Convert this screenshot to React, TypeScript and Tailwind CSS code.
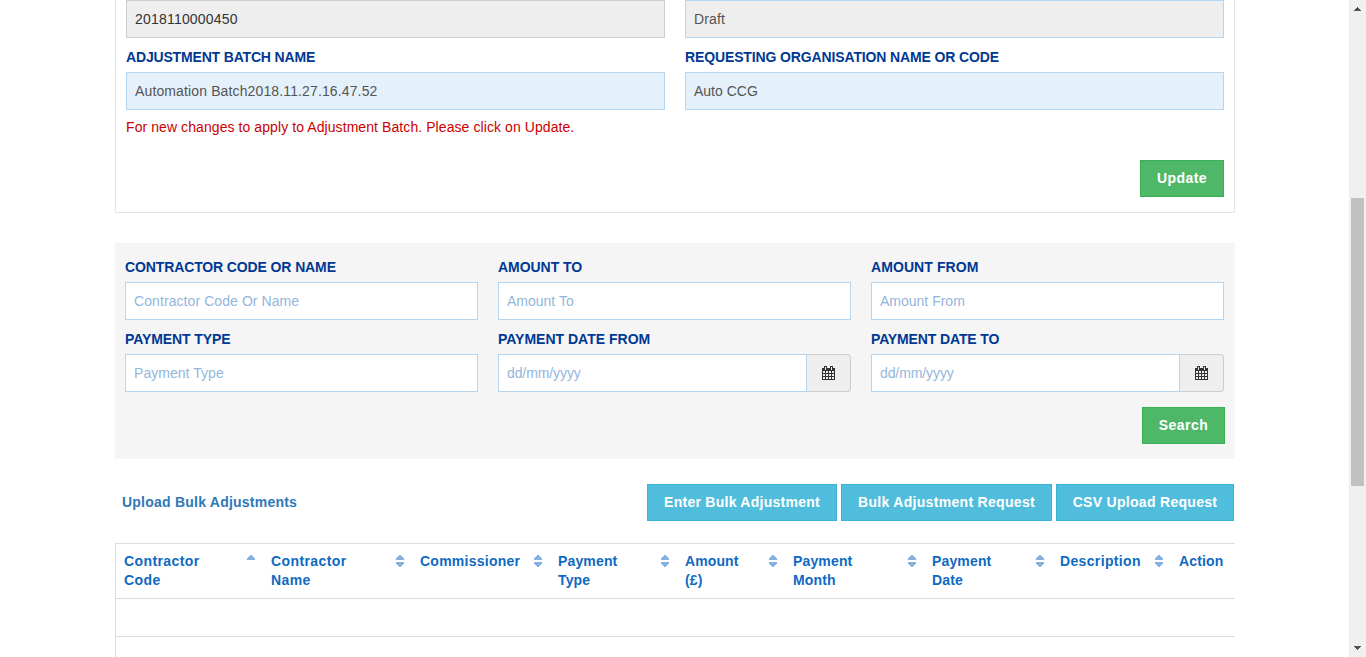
import React from "react";

const LABEL = "flex h-[34px] items-center whitespace-nowrap pb-px pt-1.5 font-bold text-[#003893]";
const INPUT =
  "h-[38px] w-full min-w-0 rounded-none border border-[#b6d6f0] px-2 text-[14px] outline-none placeholder:text-[#94b6dd] placeholder:opacity-100";
const BUTTON = "h-[37px] shrink-0 whitespace-nowrap border text-center font-bold text-white";

function CalendarIcon() {
  return (
    <svg width="13" height="14" viewBox="0 0 13 14" fill="none" shapeRendering="crispEdges">
      <path
        fill="#333"
        fillRule="evenodd"
        d="M0 2h2v-2h3v2h3v-2h3v2h2v12H0zM3 1v3h1V1zM9 1v3h1V1zM1 5v2h2V5zM4 5v2h2V5zM7 5v2h2V5zM10 5v2h2V5zM1 8v2h2V8zM4 8v2h2V8zM7 8v2h2V8zM10 8v2h2V8zM1 11v2h2v-2zM4 11v2h2v-2zM7 11v2h2v-2zM10 11v2h2v-2z"
      />
    </svg>
  );
}

function SortIcon({ ascending }: { ascending?: boolean }) {
  return (
    <svg width="8" height="12" viewBox="0 0 8 12" fill="#86b0de" shapeRendering="crispEdges" className="mt-[11px] shrink-0">
      <path d="M3 0h2v1h1v1h1v1h1v2H0V3h1V2h1V1h1z" />
      {!ascending && <path d="M0 7h8v2H7v1H6v1H5v1H3v-1H2v-1H1V9H0z" />}
    </svg>
  );
}

type FieldProps = {
  label: string;
  labelClass?: string;
  placeholder?: string;
  inputClass?: string;
  value?: string;
  date?: boolean;
};

function Field({ label, labelClass = "", placeholder, inputClass = "", value, date }: FieldProps) {
  return (
    <div>
      <label className={`${LABEL} ${labelClass}`}>{label}</label>
      <div className="flex">
        <input className={`${INPUT} ${inputClass}`} placeholder={placeholder} defaultValue={value} />
        {date && (
          <span className="flex h-[38px] w-[44px] shrink-0 items-center justify-center rounded-r border border-l-0 border-[#ccc] bg-[#eee]">
            <CalendarIcon />
          </span>
        )}
      </div>
    </div>
  );
}

const columns = [
  { lines: ["Contractor", "Code"], cell: "w-[146px] pl-2 tracking-[0.4px]" },
  { lines: ["Contractor", "Name"], cell: "w-[149px] pl-[9px] tracking-[0.4px]" },
  { lines: ["Commissioner"], cell: "w-[138px] pl-[9px] tracking-[0.25px]" },
  { lines: ["Payment", "Type"], cell: "w-[127px] pl-[9px] tracking-[0.15px]" },
  { lines: ["Amount", "(£)"], cell: "w-[108px] pl-[9px] tracking-[0.1px]" },
  { lines: ["Payment", "Month"], cell: "w-[139px] pl-[9px] tracking-[0.15px]" },
  { lines: ["Payment", "Date"], cell: "w-[128px] pl-[9px] tracking-[0.15px]" },
  { lines: ["Description"], cell: "w-[119px] pl-[9px] tracking-[0.35px]" },
];

function ScrollBar() {
  return (
    <div className="flex h-full w-[17px] shrink-0 flex-col items-center justify-between bg-[#f0f0f0] py-[7px]">
      <svg width="7" height="4" viewBox="0 0 7 4" fill="#505050" shapeRendering="crispEdges" className="shrink-0">
        <path d="M3 0h1v1h1v1h1v1h1v1H0V3h1V2h1V1h1z" />
      </svg>
      <div className="mb-[160px] mt-[187px] w-[13px] grow bg-[#c1c1c1]" />
      <svg width="7" height="4" viewBox="0 0 7 4" fill="#505050" shapeRendering="crispEdges" className="shrink-0">
        <path d="M0 0h7v1H6v1H5v1H4v1H3V3H2V2H1V1H0z" />
      </svg>
    </div>
  );
}

export default function App() {
  return (
    <div className="flex h-[657px] w-[1366px] overflow-hidden bg-white font-['Liberation_Sans',Arial,sans-serif] text-[14px] leading-[19px]">
      <main className="w-[1349px] shrink-0 pl-[115px]">
        <div className="w-[1120px]">
          <section className="h-[213px] border border-t-0 border-[#e4e4e4] px-[10px]">
            <div className="grid grid-cols-2 gap-x-5">
              <input readOnly className="h-[38px] border border-[#ccc] bg-[#eee] px-2 tracking-[0.2px] text-[#333] outline-none" defaultValue="2018110000450" />
              <input readOnly className={`${INPUT} bg-[#eee] text-[#555] tracking-[0.15px]`} defaultValue="Draft" />
              <Field label="ADJUSTMENT BATCH NAME" labelClass="tracking-[-0.17px]" value="Automation Batch2018.11.27.16.47.52" inputClass="bg-[#e4f0fa] text-[#555] tracking-[0.13px]" />
              <Field label="REQUESTING ORGANISATION NAME OR CODE" labelClass="tracking-[-0.13px]" value="Auto CCG" inputClass="bg-[#e4f0fa] text-[#555]" />
            </div>
            <p className="mt-2 whitespace-nowrap tracking-[0.08px] text-[#c00]">
              For new changes to apply to Adjustment Batch. Please click on Update.
            </p>
            <div className="mt-[23px] flex justify-end">
              <button className={`${BUTTON} w-[84px] border-[#39b054] bg-[#4fb768] tracking-[0.4px]`}>Update</button>
            </div>
          </section>

          <section className="mt-[30px] h-[216px] bg-[#f5f5f5] px-[10px] pt-[5px]">
            <div className="grid grid-cols-[353px_353px_353px] gap-x-5">
              <Field label="CONTRACTOR CODE OR NAME" labelClass="tracking-[-0.12px]" placeholder="Contractor Code Or Name" inputClass="bg-white tracking-[0.08px]" />
              <Field label="AMOUNT TO" labelClass="tracking-[-0.05px]" placeholder="Amount To" inputClass="bg-white" />
              <Field label="AMOUNT FROM" labelClass="tracking-[0.08px]" placeholder="Amount From" inputClass="bg-white" />
              <Field label="PAYMENT TYPE" labelClass="tracking-[-0.08px]" placeholder="Payment Type" inputClass="bg-white tracking-[0.04px]" />
              <Field label="PAYMENT DATE FROM" placeholder="dd/mm/yyyy" inputClass="bg-white tracking-[-0.1px]" date />
              <Field label="PAYMENT DATE TO" labelClass="tracking-[-0.13px]" placeholder="dd/mm/yyyy" inputClass="bg-white tracking-[-0.1px]" date />
            </div>
            <div className="mt-[15px] flex justify-end">
              <button className={`${BUTTON} w-[83px] border-[#39b054] bg-[#4fb768] tracking-[0.45px]`}>Search</button>
            </div>
          </section>

          <div className="mt-[25px] flex h-[37px] items-center gap-1 pl-[7px] pr-px">
            <a className="grow whitespace-nowrap font-bold tracking-[0.23px] text-[#2e78b7]">Upload Bulk Adjustments</a>
            <button className={`${BUTTON} w-[190px] border-[#39b3d7] bg-[#51bddc] tracking-[0.26px]`}>Enter Bulk Adjustment</button>
            <button className={`${BUTTON} w-[211px] border-[#39b3d7] bg-[#51bddc] tracking-[0.31px]`}>Bulk Adjustment Request</button>
            <button className={`${BUTTON} w-[178px] border-[#39b3d7] bg-[#51bddc] tracking-[0.3px]`}>CSV Upload Request</button>
          </div>

          <div className="mt-[22px] border-l border-t border-[#ddd]">
            <div className="flex h-[55px] border-b border-[#ddd] font-bold text-[#0f6ac2]">
              {columns.map((c, i) => (
                <div key={i} className={`flex shrink-0 justify-between pr-[7px] ${c.cell}`}>
                  <div className="whitespace-nowrap pt-2">
                    {c.lines.map((l) => (
                      <div key={l}>{l}</div>
                    ))}
                  </div>
                  <SortIcon ascending={i === 0} />
                </div>
              ))}
              <div className="pl-[9px] pt-2 tracking-[0.15px]">Action</div>
            </div>
            <div className="h-[38px] border-b border-[#ddd]" />
            <div className="h-[38px]" />
          </div>
        </div>
      </main>
      <ScrollBar />
    </div>
  );
}
